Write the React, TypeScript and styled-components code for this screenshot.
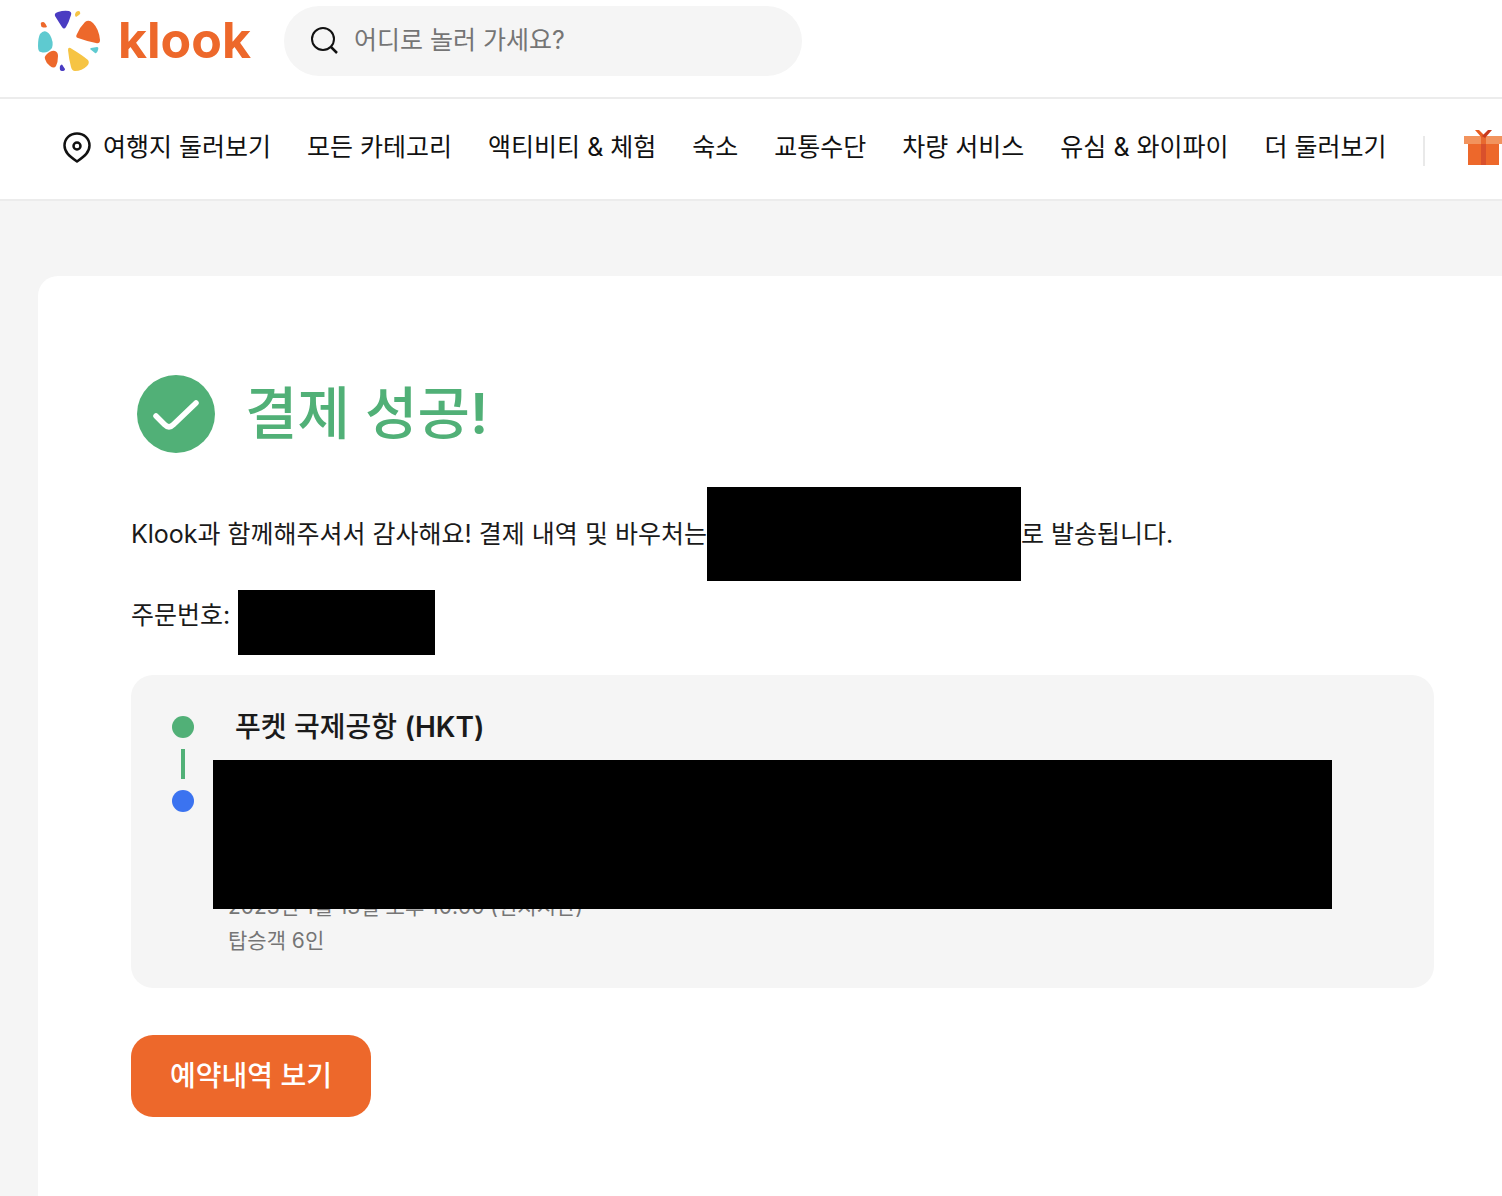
import React from "react";
import styled, { createGlobalStyle } from "styled-components";

const GlobalStyle = createGlobalStyle`
  * { box-sizing: border-box; }
  body {
    margin: 0;
    background: #f5f5f5;
    color: #1a1a1a;
    font-family: Inter, "Noto Sans CJK KR", sans-serif;
    font-size: 25px;
    line-height: 36px;
    overflow-x: hidden;
  }
  h1, h2, p, ul { margin: 0; padding: 0; }
`;

const Page = styled.div`
  display: flex;
  flex-direction: column;
  min-height: 100vh;
`;

const Header = styled.header`
  display: flex;
  align-items: flex-start;
  gap: 32px;
  padding: 6px 36px 21px;
  background: #fff;
  border-bottom: 2px solid #ececec;
`;

const Logo = styled.a`
  display: flex;
  align-items: center;
  gap: 16px;
  width: 216px;
  height: 70px;
  color: #ed682b;
  text-decoration: none;
`;

const Wordmark = styled.span`
  padding-bottom: 2px;
  font-size: 50px;
  font-weight: 700;
  line-height: 60px;
`;

const SearchBox = styled.label`
  display: flex;
  align-items: center;
  gap: 14px;
  flex: 0 1 518px;
  height: 70px;
  padding: 0 24px 2px;
  border-radius: 35px;
  background: #f5f5f5;
`;

const SearchInput = styled.input`
  flex: 1;
  min-width: 0;
  padding: 0;
  border: 0;
  outline: 0;
  background: transparent;
  font: inherit;
  color: #212121;
  &::placeholder { color: #757575; opacity: 1; }
`;

const Nav = styled.nav`
  background: #fff;
  border-bottom: 2px solid #ececec;
  overflow: hidden;
`;

const NavList = styled.ul`
  display: flex;
  align-items: center;
  gap: 36px;
  height: 100px;
  padding: 0 0 4px 62px;
  list-style: none;
  white-space: nowrap;
`;

const NavItem = styled.li`
  flex: none;
`;

const NavLink = styled.a`
  display: flex;
  align-items: center;
  gap: 11px;
  color: #111;
  text-decoration: none;
`;

const Divider = styled.li`
  flex: none;
  width: 2px;
  height: 30px;
  margin-top: 8px;
  background: #e9e9e9;
`;

const Panel = styled.main`
  flex: 1;
  margin: 75px 0 0 38px;
  padding: 99px 68px 79px 93px;
  border-radius: 20px 0 0 0;
  background: #fff;
`;

const Status = styled.div`
  display: flex;
  align-items: center;
  gap: 30px;
  padding-left: 6px;
  margin-bottom: 34px;
  color: #51b077;
`;

const StatusTitle = styled.h1`
  font-size: 57px;
  font-weight: 500;
  line-height: 78px;
`;

const Latin = styled.span`
  font-weight: 600;
`;

const Message = styled.p`
  display: flex;
  align-items: center;
  margin-bottom: 9px;
  white-space: nowrap;
`;

const OrderNumber = styled.p`
  display: flex;
  align-items: flex-start;
  gap: 8px;
  margin-bottom: 20px;
  line-height: 50px;
`;

const Redacted = styled.span<{ $width: number; $height: number }>`
  flex: none;
  width: ${(p) => p.$width}px;
  height: ${(p) => p.$height}px;
  background: #000;
`;

const Journey = styled.section`
  display: flex;
  gap: 34px;
  margin-bottom: 47px;
  padding: 34px 102px 30px 41px;
  border-radius: 22px;
  background: #f5f5f5;
`;

const Timeline = styled.div`
  display: flex;
  flex-direction: column;
  align-items: center;
  gap: 11px;
  padding-top: 7px;
`;

const Dot = styled.span<{ $color: string }>`
  width: 22px;
  height: 22px;
  border-radius: 50%;
  background: ${(p) => p.$color};
`;

const Line = styled.span`
  width: 4px;
  height: 30px;
  background: #51b077;
`;

const Details = styled.div`
  flex: 1;
  min-width: 0;
`;

const Airport = styled.h2`
  padding-left: 7px;
  margin-bottom: 15px;
  font-size: 28px;
  font-weight: 500;
  line-height: 36px;
`;

const RedactedDetails = styled.div`
  position: relative;
  z-index: 1;
  height: 149px;
  margin: 0 0 -19px -15px;
  background: #000;
`;

const Meta = styled.p`
  font-size: 21px;
  line-height: 34px;
  color: #757575;
`;

const PrimaryButton = styled.button`
  display: block;
  height: 82px;
  padding: 0 39px;
  border: 0;
  border-radius: 22px;
  background: #ed682b;
  color: #fff;
  font: inherit;
  font-size: 28px;
  font-weight: 500;
  cursor: pointer;
`;

const LogoMark = () => (
  <svg width="66" height="64" viewBox="0 0 66 64" aria-hidden="true">
    <path fill="#4a3cc2" d="M19 7 Q18 4 22 3 Q28 1 33 2 Q36 3 35 6 Q33 13 30 18 Q28 21 26 18 Q24 15 19 7Z" />
    <path fill="#f6c444" d="M40 3 Q43 1 44 3 Q45 5 43 6 L40 8 Q38 6 40 3Z" />
    <path fill="#ed682b" d="M5 16 Q4 13 7 13 Q9 13 11 18 Q8 19 6 18 Q5 18 5 16Z" />
    <path fill="#ed682b" d="M49 13 Q53 10 57 14 Q63 20 64 31 Q64 35 60 34 Q50 32 42 29 Q39 28 41 25 Q44 18 49 13Z" />
    <path fill="#5ecad0" d="M4 25 Q9 19 14 26 Q18 33 16 39 Q11 45 5 43 Q2 43 2 37 Q2 29 4 25Z" />
    <path fill="#ed682b" d="M10 46 Q15 41 19 42 Q22 43 22 47 Q22 53 20 57 Q18 60 14 57 Q10 54 9 50 Q8 48 10 46Z" />
    <path fill="#4a3cc2" d="M24 57 Q26 54 27 57 L29 60 Q29 62 26 62 Q23 62 24 57Z" />
    <path fill="#f6c444" d="M32 41 Q32 37 36 40 Q46 46 52 51 Q54 54 51 57 Q46 62 39 62 Q36 62 35 58 Q33 51 32 41Z" />
    <path fill="#5ecad0" d="M55 39 L61 38 Q63 38 62 41 Q61 45 59 44 L54 40Z" />
  </svg>
);

const SearchIcon = () => (
  <svg width="32" height="32" viewBox="0 0 32 32" fill="none" stroke="#111" strokeWidth="2" aria-hidden="true">
    <circle cx="15" cy="15" r="11" />
    <path d="M22.500 22.500 29 29" strokeWidth="2.500" />
  </svg>
);

const PinIcon = () => (
  <svg width="30" height="32" viewBox="0 0 30 32" fill="none" stroke="#111" strokeWidth="2.500" strokeLinejoin="round" aria-hidden="true">
    <path d="M15 2.500C8 2.500 2.500 7.500 2.500 14.500C2.500 21 7 25 15 30.500C23 25 27.500 21 27.500 14.500C27.500 7.500 22 2.500 15 2.500Z" />
    <circle cx="15" cy="15" r="3.500" />
  </svg>
);

const GiftIcon = () => (
  <svg width="42" height="40" viewBox="-2 0 42 40" aria-hidden="true">
    <rect x="5" y="12" width="31" height="26" fill="#ed682b" />
    <rect x="1" y="9" width="38" height="8" fill="#f2935d" />
    <rect x="18" y="17" width="5" height="21" fill="#d9502c" />
    <rect x="18" y="9" width="5" height="8" fill="#e8692f" />
    <path d="M12 3h4l5 5-2 3z" fill="#e85d20" />
    <path d="M29 3h-4l-6 6 3 2z" fill="#c93a1c" />
  </svg>
);

const SuccessIcon = () => (
  <svg width="78" height="78" viewBox="0 0 78 78" aria-hidden="true">
    <circle cx="39" cy="39" r="39" fill="#51b077" />
    <path d="M19 41 L27.500 49.500 Q32 54 36.500 49.500 L59 28" fill="none" stroke="#fff" strokeWidth="5.500" strokeLinecap="round" />
  </svg>
);

const categories = ["모든 카테고리", "액티비티 & 체험", "숙소", "교통수단", "차량 서비스", "유심 & 와이파이", "더 둘러보기"];

export default function App() {
  return (
    <Page>
      <GlobalStyle />
      <Header>
        <Logo href="#">
          <LogoMark />
          <Wordmark>klook</Wordmark>
        </Logo>
        <SearchBox>
          <SearchIcon />
          <SearchInput type="text" placeholder="어디로 놀러 가세요?" />
        </SearchBox>
      </Header>
      <Nav>
        <NavList>
          <NavItem>
            <NavLink href="#">
              <PinIcon />
              여행지 둘러보기
            </NavLink>
          </NavItem>
          {categories.map((name) => (
            <NavItem key={name}>
              <NavLink href="#">{name}</NavLink>
            </NavItem>
          ))}
          <Divider role="separator" />
          <NavItem>
            <NavLink href="#">
              <GiftIcon />
            </NavLink>
          </NavItem>
        </NavList>
      </Nav>
      <Panel>
        <Status>
          <SuccessIcon />
          <StatusTitle>
            결제 성공<Latin>!</Latin>
          </StatusTitle>
        </Status>
        <Message>
          Klook과 함께해주셔서 감사해요! 결제 내역 및 바우처는
          <Redacted $width={314} $height={94} />
          로 발송됩니다.
        </Message>
        <OrderNumber>
          주문번호:
          <Redacted $width={197} $height={65} />
        </OrderNumber>
        <Journey>
          <Timeline>
            <Dot $color="#51b077" />
            <Line />
            <Dot $color="#3b73f0" />
          </Timeline>
          <Details>
            <Airport>
              푸켓 국제공항 <Latin>(HKT)</Latin>
            </Airport>
            <RedactedDetails />
            <Meta>2023년 1월 13일 오후 10:00 (현지시간)</Meta>
            <Meta>탑승객 6인</Meta>
          </Details>
        </Journey>
        <PrimaryButton type="button">예약내역 보기</PrimaryButton>
      </Panel>
    </Page>
  );
}
